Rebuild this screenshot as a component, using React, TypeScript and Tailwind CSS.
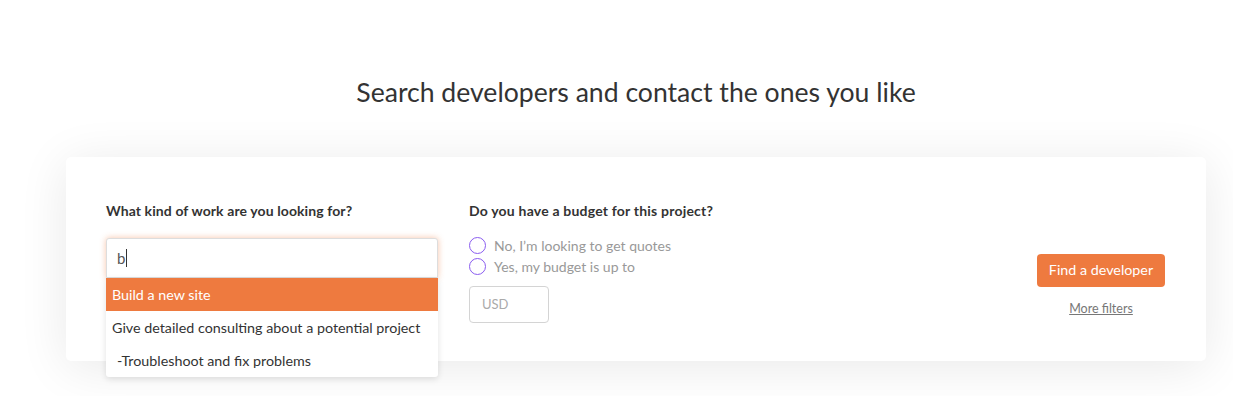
import React from "react";

export default function App() {
  return (
    <div className="w-full h-[396px] bg-white overflow-hidden font-['Lato','Open_Sans',sans-serif]">
      <h1 className="pt-[76px] pl-[39px] text-center text-[26.6px] leading-[32px] text-[#333] font-normal">
        Search developers and contact the ones you like
      </h1>
      <div className="ml-[66px] w-[1140px] mt-[49px] h-[204px] rounded-[5px] bg-white shadow-[0_6px_50px_rgba(0,0,0,0.09)] flex pl-[40px] pr-[41px] pt-[45px]">
        <div className="w-[332px]">
          <div className="text-[14px] tracking-[0.1px] font-bold text-[#333] leading-[18px]">What kind of work are you looking for?</div>
          <div className="relative mt-[18px]">
            <div className="h-[40px] rounded-t-[3px] border border-[#ddd] bg-white shadow-[0_0_6px_rgba(238,122,63,0.45)] flex items-center pl-[10px] text-[15px] text-[#555]">
              b<span className="ml-[1px] inline-block w-px h-[18px] bg-[#333]" />
            </div>
            <div className="absolute left-0 right-0 top-[40px] bg-white shadow-[0_2px_6px_rgba(0,0,0,0.12)] rounded-b-[3px] text-[14.3px] z-10">
              <div className="h-[33px] flex items-center px-[6px] bg-[#ee7a3f] text-white">Build a new site</div>
              <div className="h-[33px] flex items-center px-[6px] text-[#333]">Give detailed consulting about a potential project</div>
              <div className="h-[33px] flex items-center px-[11px] text-[#333]">-Troubleshoot and fix problems</div>
            </div>
          </div>
        </div>
        <div className="ml-[31px]">
          <div className="text-[14px] tracking-[0.2px] font-bold text-[#333] leading-[18px]">Do you have a budget for this project?</div>
          <div className="mt-[17px] flex flex-col gap-[4px]">
            <label className="flex items-center gap-[8px] h-[17px] text-[14px] text-[#999]">
              <span className="w-[17px] h-[17px] rounded-full border-[1.5px] border-[#8a5cf0] bg-white" />
              No, I’m looking to get quotes
            </label>
            <label className="flex items-center gap-[8px] h-[17px] text-[14px] text-[#999]">
              <span className="w-[17px] h-[17px] rounded-full border-[1.5px] border-[#8a5cf0] bg-white" />
              Yes, my budget is up to
            </label>
          </div>
          <div className="mt-[11px] w-[80px] h-[37px] rounded-[4px] border border-[#d4d4d4] flex items-center pl-[12px] text-[13px] text-[#aaa]">USD</div>
        </div>
        <div className="ml-auto pt-[52px] flex flex-col items-center">
          <button className="h-[33px] w-[128px] rounded-[4px] bg-[#ee7a3f] text-white text-[14.3px] leading-none">Find a developer</button>
          <a className="mt-[13px] text-[12.5px] text-[#777] underline">More filters</a>
        </div>
      </div>
    </div>
  );
}
